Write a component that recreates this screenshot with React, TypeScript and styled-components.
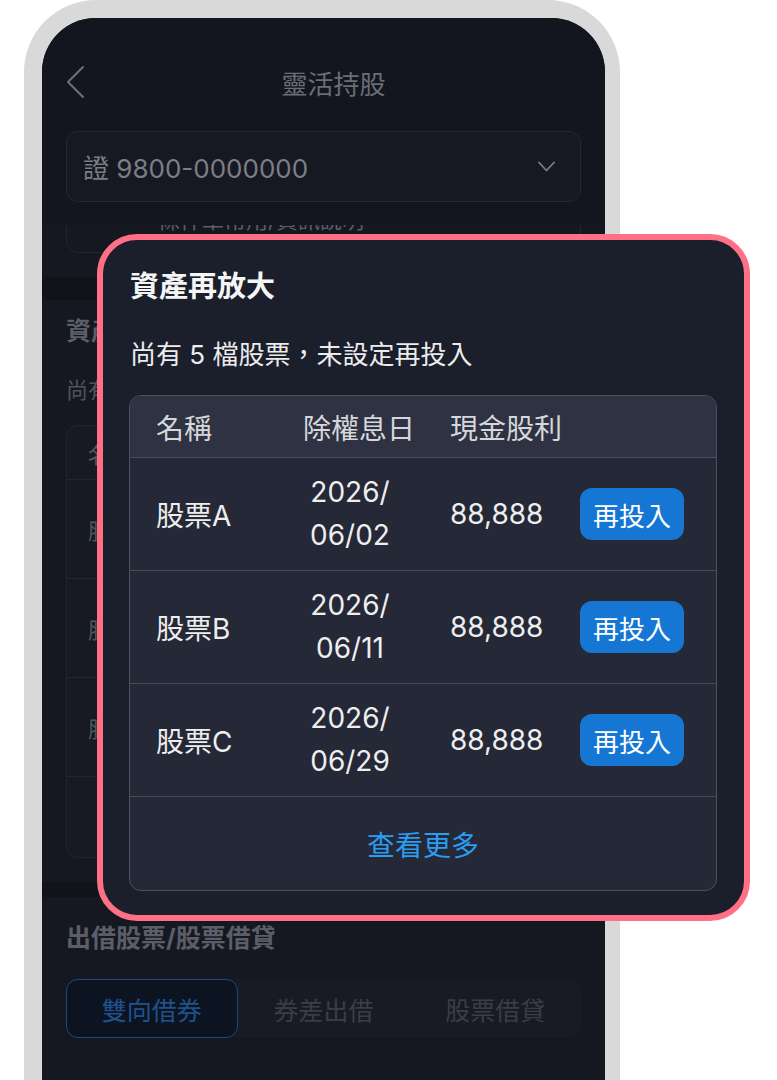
import React from 'react'
import styled, { createGlobalStyle } from 'styled-components'

const FONT = `Inter, "Noto Sans CJK TC", "Noto Sans", sans-serif`

const GlobalStyle = createGlobalStyle`
    html, body {
        margin: 0;
        padding: 0;
        background: #ffffff;
    }
    body {
        font-family: ${FONT};
    }
`

const Stage = styled.div`
    position: relative;
    width: 777px;
    height: 1080px;
    overflow: hidden;
    background: #ffffff;
    font-family: ${FONT};
`

const PhoneFrame = styled.div`
    margin-left: 24px;
    width: 596px;
    height: 1080px;
    box-sizing: border-box;
    padding: 18px 15px 0 18px;
    background: #d9d9d9;
    border-radius: 72px 72px 0 0;
`

const Screen = styled.div`
    height: 100%;
    background: #10131a;
    border-radius: 54px 54px 0 0;
    overflow: hidden;
    display: flex;
    flex-direction: column;
`

const TopBar = styled.div`
    position: relative;
    z-index: 1;
    background: #13161e;
    padding: 0 24px 23px;
`

const NavRow = styled.div`
    display: flex;
    align-items: center;
    height: 100px;
    box-sizing: border-box;
    padding-top: 28px;
`

const NavTitle = styled.div`
    flex: 1;
    text-align: center;
    font-size: 26px;
    color: #6b6e76;
`

const Dropdown = styled.div`
    margin-top: 13px;
    height: 71px;
    box-sizing: border-box;
    border: 1px solid #252831;
    border-radius: 12px;
    background: #161922;
    padding: 0 25px 0 16px;
    display: flex;
    align-items: center;
    justify-content: space-between;
    font-size: 26px;
    color: #7b7e86;
`

const Content = styled.div`
    flex: 1;
    margin-top: -60px;
    display: flex;
    flex-direction: column;
`

const Section = styled.div<{ gapAfter?: number; grow?: boolean }>`
    background: #151821;
    padding: ${props => props.grow ? "24px 24px 0" : "14px 24px 24px"};
    margin-bottom: ${props => props.gapAfter ? props.gapAfter : 0}px;
    flex: ${props => props.grow ? 1 : "none"};
`

const TopSection = styled(Section)`
    padding: 0 24px 24px;
`

const NoteCard = styled.div`
    height: 88px;
    box-sizing: border-box;
    border: 1px solid #22252e;
    border-radius: 12px;
    display: flex;
    align-items: flex-end;
    padding: 0 0 17px 91px;
    font-size: 22px;
    line-height: 30px;
    color: #5c5f68;
`

const SectionTitle = styled.div`
    font-size: 25px;
    line-height: 34px;
    font-weight: 700;
    color: #5b5e67;
`

const SectionText = styled.div`
    margin-top: 27px;
    font-size: 22px;
    line-height: 30px;
    color: #50535c;
`

const BgTable = styled.div`
    margin-top: 20px;
    border: 1px solid #23262f;
    border-radius: 12px;
    background: #171a23;
    overflow: hidden;
`

const BgRow = styled.div<{ h: number }>`
    height: ${props => props.h}px;
    display: grid;
    grid-template-columns: 150px 150px 1fr;
    align-items: center;
    padding-left: 21px;
    font-size: 22px;
    color: #54575f;
    border-bottom: 1px solid #23262f;
    &:last-child {
        border-bottom: none;
    }
`

const Tabs = styled.div`
    margin-top: 24px;
    height: 59px;
    border-radius: 12px;
    background: #181b24;
    display: grid;
    grid-template-columns: repeat(3, 1fr);
`

const Tab = styled.div<{ active?: boolean }>`
    display: flex;
    align-items: center;
    justify-content: center;
    border-radius: 12px;
    font-size: 25px;
    box-sizing: border-box;
    border: 1px solid ${props => props.active ? "#1d4a78" : "transparent"};
    background: ${props => props.active ? "#0c1422" : "transparent"};
    color: ${props => props.active ? "#1f528a" : "#3a3d47"};
`

/* popup over the phone */

const Popup = styled.div`
    position: absolute;
    left: 97px;
    top: 234px;
    width: 653px;
    box-sizing: border-box;
    border: 6px solid #ff6f85;
    border-radius: 40px;
    background: #1b1f2c;
    padding: 27px 27px 24px 26px;
    z-index: 5;
`

const PopupTitle = styled.div`
    font-size: 29px;
    line-height: 40px;
    font-weight: 700;
    color: #f5f5f5;
    padding-left: 1px;
`

const PopupText = styled.div`
    margin-top: 28px;
    font-size: 26px;
    line-height: 40px;
    color: #ececec;
    padding-left: 1px;
`

const Table = styled.div`
    margin-top: 20px;
    border: 1px solid #4d515d;
    border-radius: 12px;
    background: #242837;
    overflow: hidden;
`

const HeadRow = styled.div`
    display: grid;
    grid-template-columns: 147px 147px 130px 1fr;
    align-items: center;
    padding-left: 26px;
    height: 61px;
    background: #2e3242;
    border-bottom: 1px solid #4a4e5a;
    font-size: 28px;
    color: #d5d7db;
`

const Row = styled.div`
    display: grid;
    grid-template-columns: 147px 147px 130px 1fr;
    align-items: center;
    padding-left: 26px;
    height: 112px;
    border-bottom: 1px solid #474b57;
    font-size: 28px;
    color: #eeeeee;
`

const DateCell = styled.div`
    width: 94px;
    text-align: center;
    line-height: 43px;
`

const ReinvestButton = styled.button`
    width: 104px;
    height: 52px;
    border: none;
    border-radius: 12px;
    background: #1577d3;
    color: #ffffff;
    font-family: ${FONT};
    font-size: 26px;
    padding: 0;
`

const MoreRow = styled.div`
    height: 93px;
    display: flex;
    align-items: center;
    justify-content: center;
    font-size: 28px;
    color: #2b9cf2;
`

const stocks = [
    { name: "股票A", date: ["2026/", "06/02"], amount: "88,888" },
    { name: "股票B", date: ["2026/", "06/11"], amount: "88,888" },
    { name: "股票C", date: ["2026/", "06/29"], amount: "88,888" },
]

const BackIcon = () => (
    <svg width="20" height="34" viewBox="0 0 20 34" fill="none">
        <path d="M17 2 L2 17 L17 32" stroke="#6b6e76" strokeWidth="2" strokeLinecap="round" strokeLinejoin="round" />
    </svg>
)

const DownIcon = () => (
    <svg width="17" height="11" viewBox="0 0 17 11" fill="none">
        <path d="M1 1.5 L8.5 9.5 L16 1.5" stroke="#7b7e86" strokeWidth="1.8" strokeLinecap="round" strokeLinejoin="round" />
    </svg>
)

const App: React.FunctionComponent = () => {
    return (
        <Stage>
            <GlobalStyle />
            <PhoneFrame>
                <Screen>
                    <TopBar>
                        <NavRow>
                            <BackIcon />
                            <NavTitle>靈活持股</NavTitle>
                        </NavRow>
                        <Dropdown>
                            <span>證 9800-0000000</span>
                            <DownIcon />
                        </Dropdown>
                    </TopBar>

                    <Content>
                        <TopSection gapAfter={23}>
                            <NoteCard>條件單常用/資訊說明</NoteCard>
                        </TopSection>

                        <Section gapAfter={15}>
                            <SectionTitle>資產再放大</SectionTitle>
                            <SectionText>尚有 5 檔股票，未設定再投入</SectionText>
                            <BgTable>
                                <BgRow h={53}>
                                    <span>名稱</span>
                                    <span>除權息日</span>
                                    <span>現金股利</span>
                                </BgRow>
                                {stocks.map(s => (
                                    <BgRow h={98} key={s.name}>
                                        <span>{s.name}</span>
                                        <span>{s.date.join("")}</span>
                                        <span>{s.amount}</span>
                                    </BgRow>
                                ))}
                                <BgRow h={80}></BgRow>
                            </BgTable>
                        </Section>

                        <Section grow>
                            <SectionTitle>出借股票/股票借貸</SectionTitle>
                            <Tabs>
                                <Tab active>雙向借券</Tab>
                                <Tab>券差出借</Tab>
                                <Tab>股票借貸</Tab>
                            </Tabs>
                        </Section>
                    </Content>
                </Screen>
            </PhoneFrame>

            <Popup>
                <PopupTitle>資產再放大</PopupTitle>
                <PopupText>尚有 5 檔股票，未設定再投入</PopupText>
                <Table>
                    <HeadRow>
                        <span>名稱</span>
                        <span>除權息日</span>
                        <span>現金股利</span>
                        <span></span>
                    </HeadRow>
                    {stocks.map(s => (
                        <Row key={s.name}>
                            <span>{s.name}</span>
                            <DateCell>
                                {s.date[0]}
                                <br />
                                {s.date[1]}
                            </DateCell>
                            <span>{s.amount}</span>
                            <div>
                                <ReinvestButton>再投入</ReinvestButton>
                            </div>
                        </Row>
                    ))}
                    <MoreRow>查看更多</MoreRow>
                </Table>
            </Popup>
        </Stage>
    )
}

export default App
